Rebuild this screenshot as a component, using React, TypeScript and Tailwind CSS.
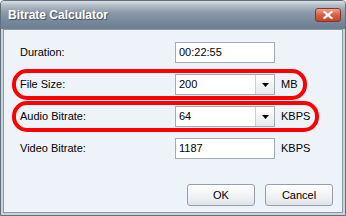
import React from 'react';

type RowProps = {
  label: string;
  value: string;
  unit?: string;
  combo?: boolean;
  highlight?: boolean;
};

function ArrowButton() {
  return (
    <div className="flex items-center justify-center w-[19px] h-full border-l border-[#c9ced4] bg-[linear-gradient(to_bottom,#ffffff,#e6e9ed)]">
      <svg width="7" height="4" viewBox="0 0 7 4">
        <path d="M0 0 H7 L3.5 4 Z" fill="#000" />
      </svg>
    </div>
  );
}

function Row({ label, value, unit, combo, highlight }: RowProps) {
  return (
    <div
      className={`flex items-center self-start ml-[8px] h-[31px] border-4 rounded-[15px] pl-[4px] pr-[5px] ${
        highlight ? 'border-[#ff0000]' : 'border-transparent'
      }`}
    >
      <span className="w-[155px] text-[11px] text-black">{label}</span>
      <div className="flex items-stretch w-[100px] h-[21px] bg-white border border-[#a3abb4]">
        <span className="flex-1 flex items-center pl-[3px] text-[11px] text-black">{value}</span>
        {combo && <ArrowButton />}
      </div>
      {unit && <span className="ml-[6px] text-[11px] text-black">{unit}</span>}
    </div>
  );
}

function DialogButton({ children }: { children: React.ReactNode }) {
  return (
    <button className="w-[68px] h-[22px] rounded-[3px] border border-[#959fa9] bg-[linear-gradient(to_bottom,#ffffff,#f0f1f3_60%,#e0e3e7)] text-[11px] text-black">
      {children}
    </button>
  );
}

export default function App() {
  return (
    <div className="w-[346px] h-[216px] flex flex-col bg-[#ccd4db] border border-[#5f6f7c] rounded-t-[4px] overflow-hidden font-['Liberation_Sans',Arial,sans-serif]">
      {/* title bar */}
      <div className="h-[28px] flex items-center pl-[7px] pr-[4px] bg-[linear-gradient(to_bottom,#dde2e6_0%,#b6c0c8_14%,#8c9baa_40%,#75879a_75%,#6d7f8e_100%)]">
        <span className="text-[12px] font-bold text-white [text-shadow:1px_1px_1px_rgba(40,50,60,0.7)]">
          Bitrate Calculator
        </span>
        <div className="ml-auto flex items-center justify-center w-[26px] h-[14px] rounded-[3px] border border-[#8c3526] bg-[linear-gradient(to_bottom,#efa48e,#d8644a_45%,#c2432c)]">
          <svg width="10" height="8" viewBox="0 0 10 8">
            <path d="M1.5 1 L8.5 7 M8.5 1 L1.5 7" stroke="#fff" strokeWidth="2.2" strokeLinecap="square" />
          </svg>
        </div>
      </div>

      {/* body */}
      <div className="flex-1 px-[2px] pb-[2px]">
        <div className="h-full flex flex-col border border-[#8b98a4] bg-[#eef3fa] pt-[7px]">
          <div className="flex flex-col gap-[1px]">
            <Row label="Duration:" value="00:22:55" />
            <Row label="File Size:" value="200" unit="MB" combo highlight />
            <Row label="Audio Bitrate:" value="64" unit="KBPS" combo highlight />
            <Row label="Video Bitrate:" value="1187" unit="KBPS" />
          </div>
          <div className="mt-auto flex justify-end gap-[10px] pr-[9px] pb-[6px]">
            <DialogButton>OK</DialogButton>
            <DialogButton>Cancel</DialogButton>
          </div>
        </div>
      </div>
    </div>
  );
}
